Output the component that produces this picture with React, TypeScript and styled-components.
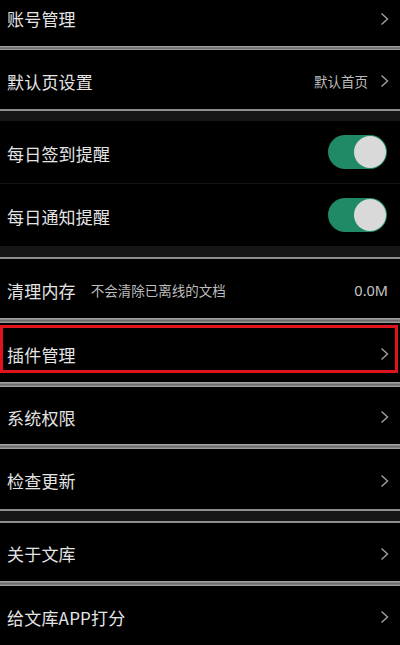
import styled, { createGlobalStyle } from 'styled-components'

const GlobalStyle = createGlobalStyle`
  html, body {
    margin: 0;
    padding: 0;
    background: #000;
  }
  body {
    font-family: "Noto Sans CJK SC", "Noto Sans", sans-serif;
    -webkit-font-smoothing: antialiased;
  }
`

const Page = styled.div`
  width: 400px;
  height: 645px;
  overflow: hidden;
  background: #000;
  display: flex;
  flex-direction: column;
`

const Row = styled.div<{ $h: number; $padBottom?: number }>`
  position: relative;
  flex: none;
  height: ${({ $h }) => $h}px;
  box-sizing: border-box;
  padding: 3px 11px ${({ $padBottom }) => $padBottom ?? 0}px 7px;
  display: flex;
  align-items: center;
  background: #000;
`

const Label = styled.span`
  font-size: 17px;
  color: #e4e4e4;
  letter-spacing: 0.2px;
  white-space: nowrap;
`

const Hint = styled.span`
  margin-left: 15px;
  font-size: 13.5px;
  color: #bdbdbd;
  white-space: nowrap;
`

const Spacer = styled.div`
  flex: 1;
`

const Value = styled.span`
  font-size: 13.5px;
  color: #bdbdbd;
  margin-right: 12px;
`

const Size = styled.span`
  font-family: "Noto Sans", "Liberation Sans", sans-serif;
  font-size: 14.5px;
  color: #c4c4c4;
  margin-right: 1px;
`

const Band = styled.div<{ $h: number }>`
  flex: none;
  height: ${({ $h }) => $h}px;
  background: linear-gradient(#a0a0a0 0, #a0a0a0 20%, #6a6a6a 45%, #6a6a6a 60%, #9c9c9c 85%, #9c9c9c 100%);
`

const Line = styled.div`
  flex: none;
  height: 2px;
  background: #8e8e8e;
`

const Gap = styled.div<{ $h: number }>`
  flex: none;
  height: ${({ $h }) => $h}px;
  background: #161616;
`

const Hair = styled.div`
  flex: none;
  height: 1px;
  background: #141414;
`

const Switch = styled.div`
  width: 59px;
  height: 34px;
  border-radius: 17px;
  background: #208a66;
  display: flex;
  align-items: center;
  justify-content: flex-end;
  padding-right: 1px;
  box-sizing: border-box;
  margin-right: 2px;
  margin-top: -3px;
`

const Knob = styled.div`
  width: 32px;
  height: 32px;
  border-radius: 50%;
  background: #d9d9d9;
`

const Highlight = styled.div`
  position: absolute;
  left: 0;
  top: 2px;
  width: 398px;
  height: 48px;
  box-sizing: border-box;
  border: 3px solid #e0141c;
  pointer-events: none;
`

const Chevron = () => (
  <svg width="9" height="14" viewBox="0 0 9 14">
    <polyline points="1.5,1.5 7.5,7 1.5,12.5" fill="none" stroke="#a0a0a0" strokeWidth="1.4" />
  </svg>
)

export default function App() {
  return (
    <Page>
      <GlobalStyle />
      <Row $h={46} $padBottom={12}>
        <Label>账号管理</Label>
        <Spacer />
        <Chevron />
      </Row>
      <Band $h={4} />
      <Row $h={59}>
        <Label>默认页设置</Label>
        <Spacer />
        <Value>默认首页</Value>
        <Chevron />
      </Row>
      <Line />
      <Gap $h={10} />
      <Row $h={62}>
        <Label>每日签到提醒</Label>
        <Spacer />
        <Switch>
          <Knob />
        </Switch>
      </Row>
      <Hair />
      <Row $h={62}>
        <Label>每日通知提醒</Label>
        <Spacer />
        <Switch>
          <Knob />
        </Switch>
      </Row>
      <Gap $h={11} />
      <Line />
      <Row $h={59}>
        <Label>清理内存</Label>
        <Hint>不会清除已离线的文档</Hint>
        <Spacer />
        <Size>0.0M</Size>
      </Row>
      <Band $h={5} />
      <Row $h={59}>
        <Label>插件管理</Label>
        <Spacer />
        <Chevron />
        <Highlight />
      </Row>
      <Band $h={5} />
      <Row $h={57}>
        <Label>系统权限</Label>
        <Spacer />
        <Chevron />
      </Row>
      <Band $h={5} />
      <Row $h={60}>
        <Label>检查更新</Label>
        <Spacer />
        <Chevron />
      </Row>
      <Line />
      <Gap $h={10} />
      <Line />
      <Row $h={58}>
        <Label>关于文库</Label>
        <Spacer />
        <Chevron />
      </Row>
      <Band $h={5} />
      <Row $h={59}>
        <Label>给文库APP打分</Label>
        <Spacer />
        <Chevron />
      </Row>
    </Page>
  )
}
